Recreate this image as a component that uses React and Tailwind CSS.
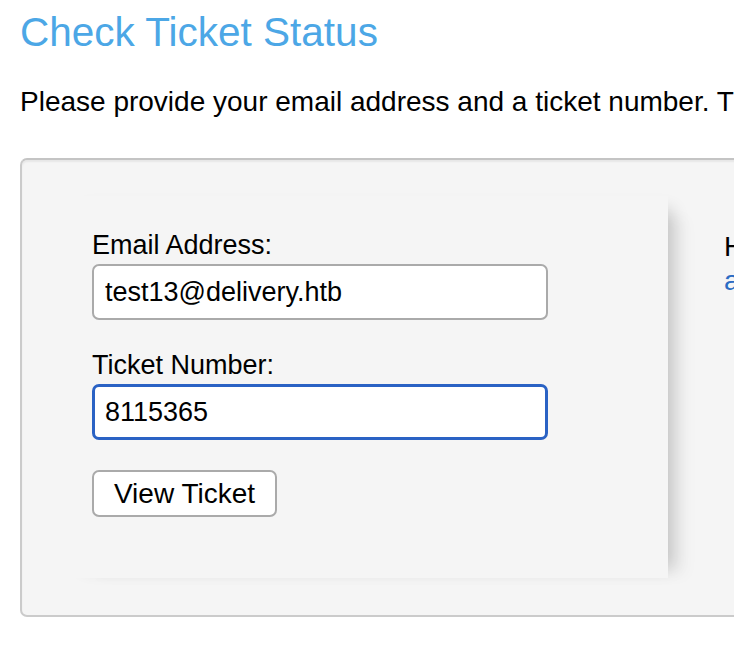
export default function App() {
  return (
    <div className="h-[646px] w-[734px] overflow-hidden bg-white font-['Liberation_Sans',Arial,sans-serif] text-black">
      <div className="pl-[20px]">
        <h1 className="mt-[12px] whitespace-nowrap text-[40.5px] leading-[40px] font-normal text-[#4ca7e6]">
          Check Ticket Status
        </h1>
        <p className="mt-[36px] whitespace-nowrap text-[28px] leading-[28px]">
          Please provide your email address and a ticket number. This will sign you in to view your ticket.
        </p>

        {/* login box */}
        <div className="mt-[42px] flex w-[1000px] rounded-[7px] border-2 border-[#cbcbcb] border-t-[#c4c4c4] bg-[#f5f5f5] pt-[36px] pb-[37px] pl-[34px] shadow-[inset_0_2px_2px_rgba(0,0,0,0.06)]">
          <div className="w-[612px] shrink-0 bg-[#f5f5f5] pt-[36px] pb-[61px] pl-[36px] shadow-[16px_2px_16px_-12px_rgba(0,0,0,0.2),30px_10px_14px_-12px_rgba(0,0,0,0.03)]">
            <label className="block text-[27px] leading-[27px]">Email Address:</label>
            <input
              readOnly
              value="test13@delivery.htb"
              className="mt-[5px] block h-[56px] w-[456px] rounded-[7px] border-2 border-[#aaaaaa] bg-white px-[11px] text-[27px] text-black outline-none"
            />
            <label className="mt-[32px] block text-[27px] leading-[27px]">Ticket Number:</label>
            <input
              readOnly
              value="8115365"
              className="mt-[5px] block h-[56px] w-[456px] rounded-[7px] border-[3px] border-[#2a62c4] bg-white px-[10px] text-[27px] text-black outline-none"
            />
            <button className="mt-[30px] block h-[47px] w-[185px] rounded-[7px] border-2 border-[#aaaaaa] bg-white text-[28px] leading-none text-black">
              View Ticket
            </button>
          </div>

          <div className="ml-[56px] pt-[34px] text-[28px] leading-[34px] whitespace-nowrap">
            <div>Have an account with us? Sign In or register for an</div>
            <div>
              <a className="text-[#2b6cc4]">account</a> to access all your tickets.
            </div>
          </div>
        </div>
      </div>
    </div>
  )
}
